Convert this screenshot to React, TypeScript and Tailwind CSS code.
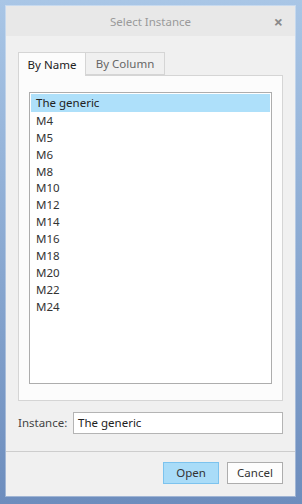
import React from "react";

const items = [
  "The generic",
  "M4",
  "M5",
  "M6",
  "M8",
  "M10",
  "M12",
  "M14",
  "M16",
  "M18",
  "M20",
  "M22",
  "M24",
];

const font = { fontFamily: '"Noto Sans", "Open Sans", sans-serif' };

export default function App() {
  return (
    <div
      className="w-[302px] h-[504px] bg-gradient-to-b from-[#a9c6e6] to-[#6d8dbd] pt-[6px] pl-[6px] text-[11.5px] text-[#333]"
      style={font}
    >
      <div className="w-[289px] h-[490px] bg-[#f0f0f0] flex flex-col shadow-[0_0_0_1px_rgba(255,255,255,0.35)]">
        {/* Title bar */}
        <div className="h-[30px] bg-[#e8e8e8] flex items-center justify-center relative shrink-0">
          <span className="text-[#9a9a9a] text-[11.5px] mt-[2px]">Select Instance</span>
          <span className="absolute right-[12px] top-[8px] text-[#8a8a8a] text-[16px] font-bold leading-none">
            ×
          </span>
        </div>

        {/* Tabs */}
        <div className="mt-[16px] ml-[12px] flex h-[23px] shrink-0">
          <div className="w-[68px] bg-[#fcfcfc] border border-b-0 border-[#d5d5d5] flex items-center justify-center text-[#222] relative z-10 h-[24px]">
            By Name
          </div>
          <div className="w-[79px] bg-[#f0f0f0] border border-l-0 border-[#d5d5d5] flex items-center justify-center text-[#666]">
            By Column
          </div>
        </div>

        {/* Panel */}
        <div className="mx-[12px] h-[326px] bg-[#fcfcfc] border border-[#d5d5d5] px-[10px] py-[16px] shrink-0">
          <div className="h-full bg-white border border-[#adadad] p-[1px]">
            {items.map((item, i) => (
              <div
                key={item}
                className={
                  i === 0
                    ? "h-[18px] bg-[#aee0fa] pl-[5px] flex items-center text-[#222]"
                    : "h-[16.9px] pl-[5px] flex items-center"
                }
              >
                {item}
              </div>
            ))}
          </div>
        </div>

        {/* Instance row */}
        <div className="mt-[11px] mx-[12px] flex items-center h-[22px] shrink-0">
          <span className="w-[55px] text-[#444]">Instance:</span>
          <div className="flex-1 h-[22px] bg-white border border-[#b4b4b4] flex items-center pl-[4px] text-[#222]">
            The generic
          </div>
        </div>

        <div className="mt-[17px] h-px bg-[#cdcdcd] shrink-0" />

        {/* Buttons */}
        <div className="mt-[10px] mr-[12px] flex justify-end gap-[8px] shrink-0">
          <div className="w-[56px] h-[22px] bg-[#a9dcf8] border border-[#7cc3ee] flex items-center justify-center text-[#333]">
            Open
          </div>
          <div className="w-[56px] h-[22px] bg-[#fdfdfd] border border-[#adadad] flex items-center justify-center text-[#333]">
            Cancel
          </div>
        </div>
      </div>
    </div>
  );
}
